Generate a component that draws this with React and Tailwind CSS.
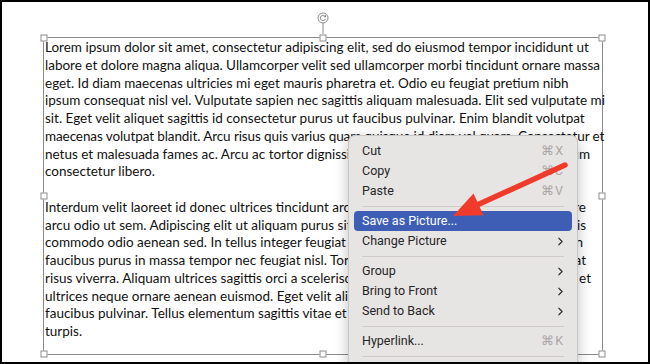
import { ChevronRight } from "lucide-react";

// end = x (inside the text block) where a line's last word stops, for lines whose tail peeks out past the menu
const para1 = [
  { t: "Lorem ipsum dolor sit amet, consectetur adipiscing elit, sed do eiusmod tempor incididunt ut" },
  { t: "labore et dolore magna aliqua. Ullamcorper velit sed ullamcorper morbi tincidunt ornare massa" },
  { t: "eget. Id diam maecenas ultricies mi eget mauris pharetra et. Odio eu feugiat pretium nibh" },
  { t: "ipsum consequat nisl vel. Vulputate sapien nec sagittis aliquam malesuada. Elit sed vulputate mi" },
  { t: "sit. Eget velit aliquet sagittis id consectetur purus ut faucibus pulvinar. Enim blandit volutpat" },
  { t: "maecenas volutpat blandit. Arcu risus quis varius quam quisque id diam vel quam. Consectetur et", tight: true },
  { t: "netus et malesuada fames ac. Arcu ac tortor dignissim convallis aenean et tortor at. Rutrum", end: 545 },
  { t: "consectetur libero." },
];

const para2 = [
  { t: "Interdum velit laoreet id donec ultrices tincidunt arcu non sodales. Sit amet nisi vel. Ornare", end: 541 },
  { t: "arcu odio ut sem. Adipiscing elit ut aliquam purus sit amet luctus venenatis lectus. Felis", end: 541 },
  { t: "commodo odio aenean sed. In tellus integer feugiat scelerisque varius morbi enim. Non", end: 538 },
  { t: "faucibus purus in massa tempor nec feugiat nisl. Tortor at auctor urna nunc id cursus nisi at", end: 541 },
  { t: "risus viverra. Aliquam ultrices sagittis orci a scelerisque purus semper eget duis at. Morbi et", end: 546 },
  { t: "ultrices neque ornare aenean euismod. Eget velit aliquet sagittis id consectetur purus" },
  { t: "faucibus pulvinar. Tellus elementum sagittis vitae et leo duis ut diam quam nulla" },
  { t: "turpis." },
];

function Line({ t, end, tight }) {
  if (!end) return <div className={tight ? "tracking-[-0.1px]" : ""}>{t}</div>;
  const cut = t.lastIndexOf(" ");
  return (
    <div className="flex justify-between" style={{ width: end }}>
      <span>{t.slice(0, cut)}</span>
      <span className="pl-1">{t.slice(cut + 1)}</span>
    </div>
  );
}

function Handle({ className }) {
  return (
    <span
      className={`absolute h-[7px] w-[7px] -translate-x-1/2 -translate-y-1/2 border border-[#8d8d8d] bg-white ${className}`}
    />
  );
}

function Item({ label, shortcut, sub, active }) {
  return (
    <div
      className={`mx-[5px] flex h-5 items-center justify-between rounded-[4px] pl-2 pr-2 ${
        active ? "bg-[#3e5eb6] text-white" : "text-[#262626]"
      }`}
    >
      <span>{label}</span>
      {shortcut && <span className="text-[#a9a6a6] tracking-[1px]">{shortcut}</span>}
      {sub && <ChevronRight size={13} strokeWidth={2.2} className="-mr-[3px] text-[#333]" />}
    </div>
  );
}

function Sep() {
  return (
    <div className="flex h-[10px] items-center px-[13px]">
      <div className="h-px w-full bg-[#cfcbcb]" />
    </div>
  );
}

export default function App() {
  return (
    <div className="relative h-[364px] w-[650px] overflow-hidden border-2 border-black bg-white">
      <div className="pl-[41px] pt-[35px]">
        <div className="relative h-[318px] w-[560px] border border-[#8a8a8a]">
          <div
            className="whitespace-nowrap pl-[1px] pt-[1px] text-[13.5px] leading-[17.75px] text-[#111]"
            style={{ fontFamily: "Lato, 'Open Sans', sans-serif" }}
          >
            {para1.map((l) => (
              <Line key={l.t} {...l} />
            ))}
            <div>&nbsp;</div>
            {para2.map((l) => (
              <Line key={l.t} {...l} />
            ))}
          </div>
          <Handle className="left-0 top-0" />
          <Handle className="left-1/2 top-0" />
          <Handle className="left-full top-0" />
          <Handle className="left-0 top-1/2" />
          <Handle className="left-full top-1/2" />
          <Handle className="left-0 top-full" />
          <Handle className="left-1/2 top-full" />
          <Handle className="left-full top-full" />
          <span className="absolute left-1/2 top-[-15px] h-[11px] w-px -translate-x-1/2 bg-[#8d8d8d]" />
          <svg
            className="absolute left-1/2 top-[-26px] -translate-x-1/2"
            width="12"
            height="12"
            viewBox="0 0 12 12"
          >
            <circle cx="6" cy="6" r="5" fill="white" stroke="#8d8d8d" strokeWidth="1" />
            <path d="M8.2 4.6 A2.6 2.6 0 1 0 8.4 7" fill="none" stroke="#777" strokeWidth="0.9" />
            <path d="M8.6 3.2 L8.4 5 L6.8 4.6" fill="none" stroke="#777" strokeWidth="0.9" />
          </svg>
        </div>
      </div>

      <div
        className="absolute left-[346px] top-[133px] w-[230px] rounded-[7px] border border-[#c9c6c6] bg-[#e7e4e4] pb-4 pt-[5px] text-[12.5px] shadow-[0_4px_14px_rgba(0,0,0,0.25)]"
        style={{ fontFamily: "Roboto, 'Liberation Sans', sans-serif" }}
      >
        <Item label="Cut" shortcut="⌘X" />
        <Item label="Copy" shortcut="⌘C" />
        <Item label="Paste" shortcut="⌘V" />
        <Sep />
        <Item label="Save as Picture..." active />
        <Item label="Change Picture" sub />
        <Sep />
        <Item label="Group" sub />
        <Item label="Bring to Front" sub />
        <Item label="Send to Back" sub />
        <Sep />
        <Item label="Hyperlink..." shortcut="⌘K" />
        <Sep />
      </div>

      <svg className="pointer-events-none absolute left-[-2px] top-[-2px]" width="650" height="364">
        <line x1="565" y1="165" x2="476" y2="205.5" stroke="#f03b2b" strokeWidth="5.5" strokeLinecap="round" />
        <polygon points="453,216 473.5,193.5 483.5,215.3" fill="#f03b2b" />
      </svg>
    </div>
  );
}
